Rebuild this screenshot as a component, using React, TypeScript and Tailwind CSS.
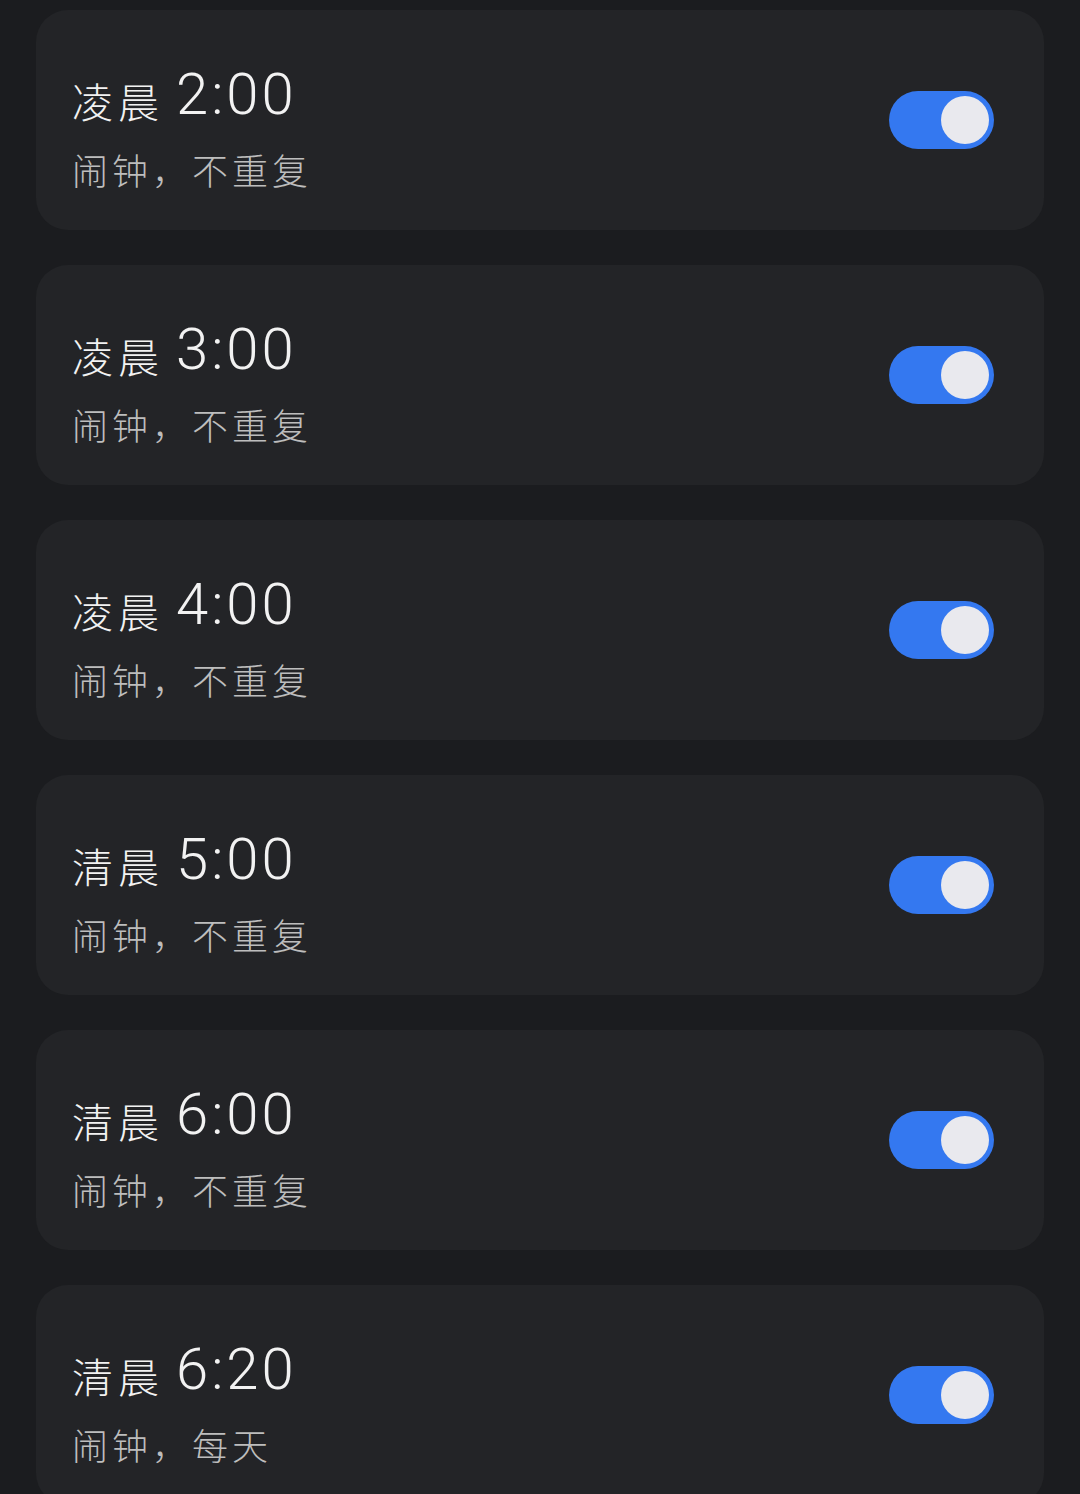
import React from "react";

const alarms = [
  { period: "凌晨", time: "2:00", sub: "闹钟，不重复" },
  { period: "凌晨", time: "3:00", sub: "闹钟，不重复" },
  { period: "凌晨", time: "4:00", sub: "闹钟，不重复" },
  { period: "清晨", time: "5:00", sub: "闹钟，不重复" },
  { period: "清晨", time: "6:00", sub: "闹钟，不重复" },
  { period: "清晨", time: "6:20", sub: "闹钟，每天" },
];

function Toggle() {
  return (
    <div className="w-[105px] h-[58px] rounded-full bg-[#3478f0] flex items-center justify-end pr-[5px] shrink-0">
      <div className="w-[48px] h-[48px] rounded-full bg-[#e9e9ee]" />
    </div>
  );
}

export default function App() {
  return (
    <div className="w-[1080px] h-[1494px] overflow-hidden bg-[#1b1c1f] pt-[10px] px-[36px] flex flex-col gap-[35px]">
      {alarms.map((a, i) => (
        <div
          key={i}
          className="h-[220px] shrink-0 rounded-[32px] bg-[#232427] flex items-center justify-between pl-[36px] pr-[50px]"
        >
          <div className="flex flex-col pt-[18px]">
            <div className="flex items-end h-[58px] text-[#f2f2f2]">
              <span className="text-[41px] leading-none tracking-[5px] font-light font-['Noto_Sans_CJK_SC',sans-serif] mb-[8px]">
                {a.period}
              </span>
              <span className="ml-[12px] text-[58px] leading-none tracking-[3px] font-['Roboto',sans-serif] font-light mb-[6px]">
                {a.time}
              </span>
            </div>
            <div className="mt-[22px] text-[36px] leading-none tracking-[4px] text-[#bdbdbd] font-light font-['Noto_Sans_CJK_SC',sans-serif]">
              {a.sub}
            </div>
          </div>
          <Toggle />
        </div>
      ))}
    </div>
  );
}
